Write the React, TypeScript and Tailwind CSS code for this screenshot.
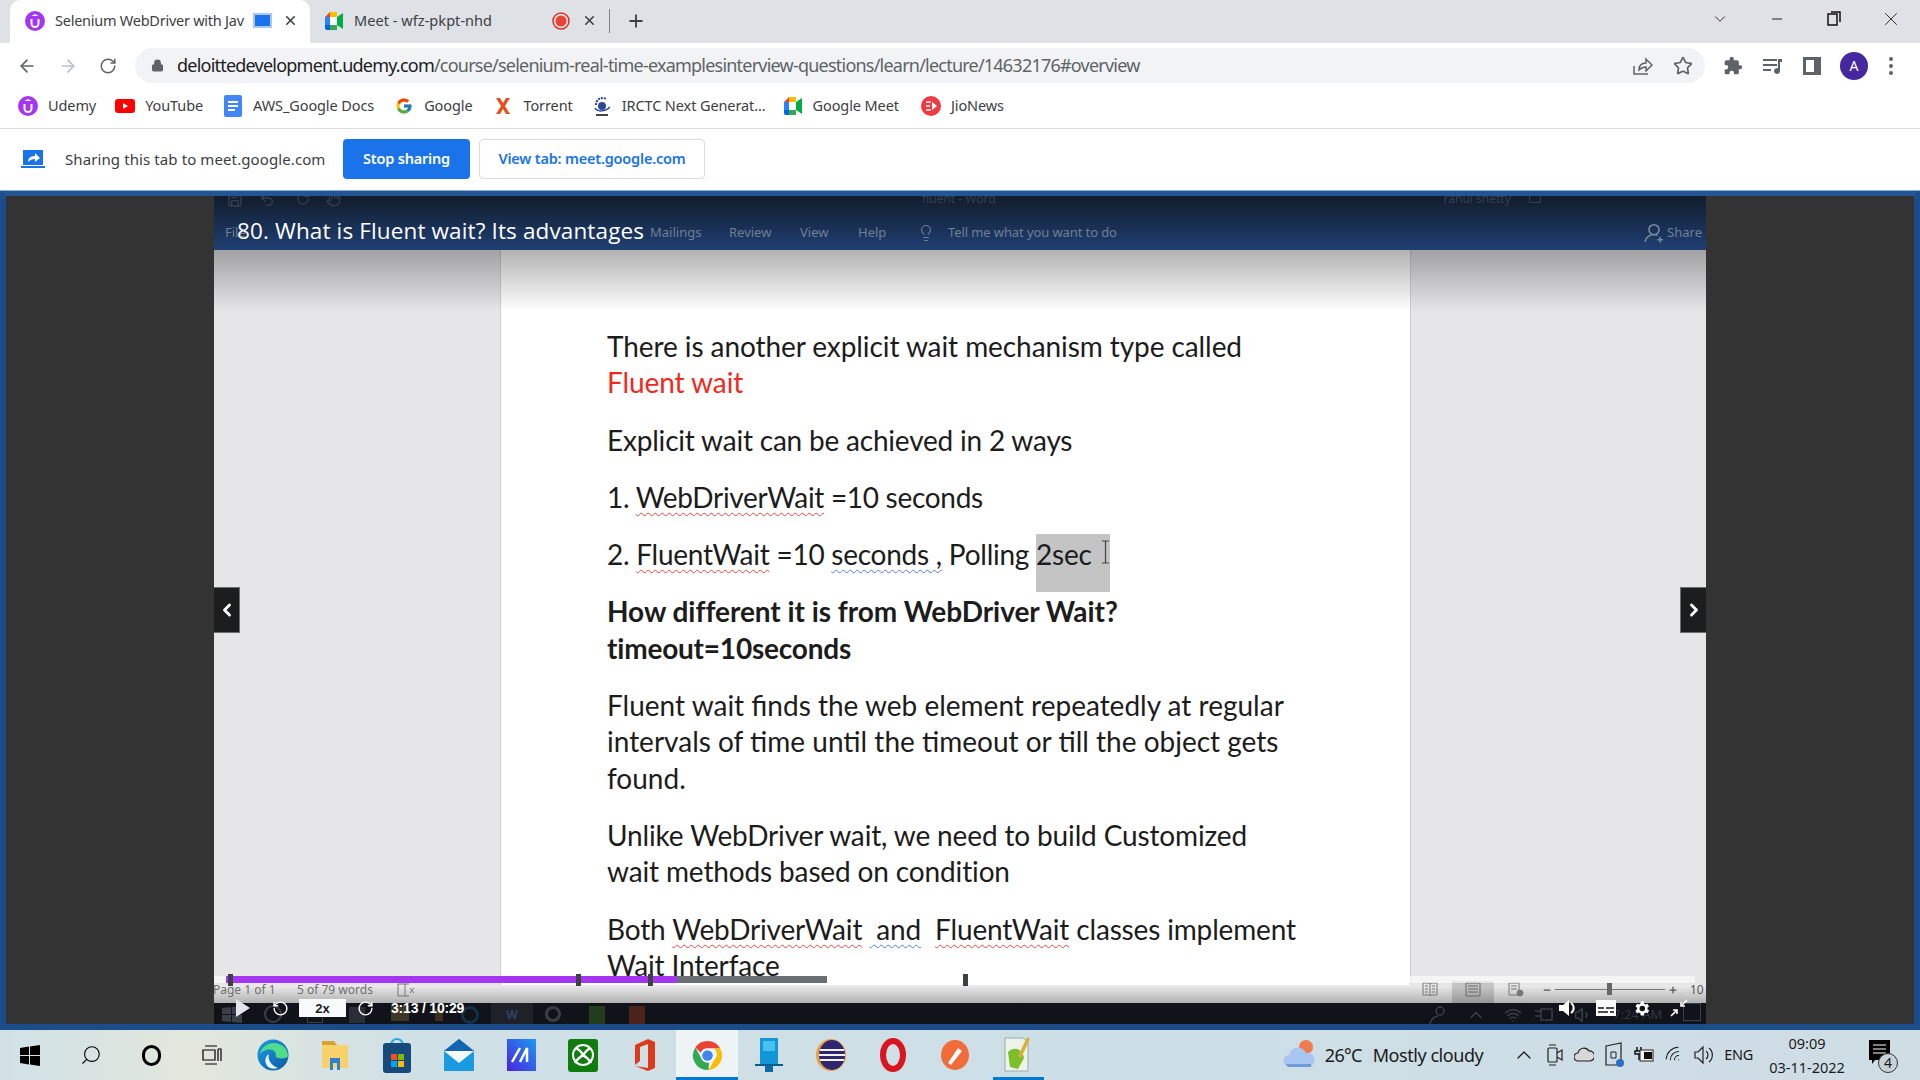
import React from "react";
import { ArrowLeft, ArrowRight, RotateCw, RotateCcw, Lock, Star, X, Plus, ChevronDown, ChevronUp, ChevronLeft, ChevronRight, Minus, Lightbulb, Volume1, Wifi, Search, Save, Undo2, Hand } from "lucide-react";
import { FcGoogle } from "react-icons/fc";

const Udemy = ({ s = 20 }: { s?: number }) => (
  <svg width={s} height={s} viewBox="0 0 20 20"><circle cx="10" cy="10" r="10" fill="#a435f0" /><path d="M6.5 8v4.5a3.5 3.5 0 0 0 7 0V8" fill="none" stroke="#fff" strokeWidth="2" /><path d="M10 3l3.5 2H6.5z" fill="#fff" /></svg>
);
const Meet = ({ s = 20 }: { s?: number }) => (
  <svg width={s} height={s} viewBox="0 0 20 20"><path d="M1 6l5-5h7v5H6v3H1z" fill="#ea4335" /><path d="M6 1h7v5H6z" fill="#fbbc04" /><path d="M1 6h5v8H1z" fill="#2684fc" /><path d="M1 14h5v5H3a2 2 0 0 1-2-2z" fill="#0066da" /><path d="M6 14h7v5H6z" fill="#34a853" /><path d="M13 6v8l6 4V2z" fill="#00ac47" /><path d="M6 6h7v8H6z" fill="#fff" /></svg>
);
const YouTube = () => (
  <svg width="20" height="14" viewBox="0 0 20 14"><rect width="20" height="14" rx="3" fill="#f00" /><path d="M8 4l5 3-5 3z" fill="#fff" /></svg>
);
const Docs = () => (
  <svg width="20" height="24" viewBox="0 0 20 24"><rect x="1" y="1" width="18" height="22" rx="2" fill="#4285f4" /><path d="M5 8h10M5 12h10M5 16h7" stroke="#fff" strokeWidth="2" /></svg>
);
const Torrent = () => (
  <svg width="16" height="18" viewBox="0 0 16 18"><path d="M1 1h4l3 5 3-5h4l-5 8 5 8h-4l-3-5-3 5H1l5-8z" fill="#e8501f" /></svg>
);
const Irctc = () => (
  <svg width="20" height="24" viewBox="0 0 20 24"><path d="M4 11a6.5 6.5 0 0 1 10-6" fill="none" stroke="#2d4a9a" strokeWidth="2" strokeDasharray="2 1" /><circle cx="10" cy="12" r="4" fill="#2d4a9a" /><path d="M3 14c2 4 10 4 15-1" fill="none" stroke="#2d4a9a" strokeWidth="1.5" /><path d="M4 20h12v2H4z" fill="#445" /></svg>
);
const Jio = () => (
  <svg width="20" height="20" viewBox="0 0 20 20"><circle cx="10" cy="10" r="10" fill="#ee3a43" /><path d="M5 6h5M5 10h4M5 14h5" stroke="#fff" strokeWidth="1.6" /><path d="M11 6l5 4-5 4z" fill="#fff" /></svg>
);
const ChromeLogo = ({ s = 30 }: { s?: number }) => (
  <svg width={s} height={s} viewBox="0 0 32 32">
    <path d="M16 1a15 15 0 0 1 13 7.5H16a7.5 7.5 0 0 0-7 4.6L3.500 7.700A15 15 0 0 1 16 1z" fill="#ea4335" />
    <path d="M29 8.500A15 15 0 0 1 17 31l6.500-11.200A7.500 7.500 0 0 0 22.500 8.500z" fill="#fbbc04" />
    <path d="M3.500 7.700L10 19.500a7.500 7.500 0 0 0 7.500 3.800L17 31A15 15 0 0 1 3.500 7.700z" fill="#34a853" />
    <circle cx="16" cy="16" r="7" fill="#fff" /><circle cx="16" cy="16" r="5.500" fill="#4285f4" />
  </svg>
);

const BOOKMARKS = [
  { icon: <Udemy />, text: "Udemy", ml: "ml-[18px]" },
  { icon: <YouTube />, text: "YouTube", ml: "ml-[19px]" },
  { icon: <Docs />, text: "AWS_Google Docs", ml: "ml-[20px]" },
  { icon: <FcGoogle size={18} />, text: "Google", ml: "ml-[20px]" },
  { icon: <Torrent />, text: "Torrent", ml: "ml-[21px]" },
  { icon: <Irctc />, text: "IRCTC Next Generat...", ml: "ml-[19px]" },
  { icon: <Meet />, text: "Google Meet", ml: "ml-[17px]" },
  { icon: <Jio />, text: "JioNews", ml: "ml-[22px]" },
];

const Red = ({ children, blue }: { children: React.ReactNode; blue?: boolean }) => (
  <span className={`underline decoration-wavy decoration-1 underline-offset-[4px] ${blue ? "decoration-[#4a7de0]" : "decoration-[#e8433a]"}`}>{children}</span>
);

const DOC = "font-['Lato',sans-serif] text-[28px] leading-[36.3px] text-[#1c1c1c]";

const Document = () => (
  <div className={`${DOC} pl-[106px] pt-[78px] flex flex-col gap-[21px]`}>
    <p className="tracking-[-0.08px]">There is another explicit wait mechanism type called<br /><span className="text-[#f0291c]">Fluent wait</span></p>
    <p className="tracking-[-0.2px]">Explicit wait can be achieved in 2 ways</p>
    <p className="tracking-[-0.3px]">1. <Red>WebDriverWait</Red> =10 seconds</p>
    <p className="tracking-[-0.25px]">2. <Red>FluentWait</Red> =10 <Red blue>seconds ,</Red> Polling <span className="relative bg-[#c4c4c4] pt-[3px] pb-[21px] pr-[18px]">2sec<svg className="absolute right-0 top-[6px]" width="9" height="24" viewBox="0 0 9 24" fill="none" stroke="#444" strokeWidth="1.200"><path d="M1 1h7M4.500 1v22M1 23h7" /></svg></span></p>
    <p className="font-bold tracking-[-0.05px]">How different it is from WebDriver Wait?<br /><span className="tracking-[-0.2px]">timeout=10seconds</span></p>
    <p className="tracking-[0px]">Fluent wait finds the web element repeatedly at regular<br />intervals of time until the timeout or till the object gets<br />found.</p>
    <p className="tracking-[-0.14px]">Unlike WebDriver wait, we need to build Customized<br />wait methods based on condition</p>
    <p className="tracking-[-0.16px]">Both <Red>WebDriverWait</Red> <Red blue>&nbsp;and</Red> &nbsp;<Red>FluentWait</Red> classes implement<br />Wait Interface</p>
  </div>
);

const NavArrow = ({ right }: { right?: boolean }) => (
  <div className={`absolute top-[337px] w-[26px] h-[46px] bg-[#1c1d1f] border border-[#6a6f73] flex items-center justify-center text-white ${right ? "right-0 border-r-0" : "left-0 border-l-0"}`}>
    {right ? <ChevronRight size={20} strokeWidth={3.500} /> : <ChevronLeft size={20} strokeWidth={3.500} />}
  </div>
);

const Marker = ({ left }: { left: string }) => <div className={`absolute top-[-2px] w-[5px] h-[12px] bg-[#3e4143] ${left}`} />;

const GearFilled = () => (
  <svg width="19" height="19" viewBox="0 0 24 24" fill="#fff"><path d="M19.400 13c.1-.3.100-.7.100-1s0-.7-.1-1l2.100-1.600-2-3.500-2.500 1a8 8 0 0 0-1.700-1L15 3.200h-4l-.4 2.700a8 8 0 0 0-1.700 1l-2.500-1-2 3.500L6.500 11c0 .3-.1.700-.1 1s0 .7.100 1l-2.100 1.600 2 3.500 2.500-1a8 8 0 0 0 1.700 1l.4 2.700h4l.4-2.700a8 8 0 0 0 1.700-1l2.500 1 2-3.500zM13 15.500a3.500 3.500 0 1 1 0-7 3.500 3.500 0 0 1 0 7z" /></svg>
);

const VideoFooter = () => (
  <div className="relative h-[45px] shrink-0">
    <div className="h-[18px] pb-[9px] bg-gradient-to-b from-[#ececec] to-[#b2b2b2] flex items-center text-[12px] text-[#6f6f6f] font-['Noto_Sans',sans-serif] relative">
      <span className="ml-[-1px] w-[84px]">Page 1 of 1</span>
      <span className="w-[100px]">5 of 79 words</span>
      <svg width="18" height="14" viewBox="0 0 18 14" fill="none" stroke="#777"><path d="M1 1h7v12H1zM8 1h4M8 13h4M13 5l4 5M17 5l-4 5" /></svg>
      <div className="ml-auto flex items-center h-full">
        <svg width="16" height="15" viewBox="0 0 16 15" fill="none" stroke="#777"><path d="M1 1h6l1 1 1-1h6v12H9l-1 1-1-1H1zM8 2v11M3 4h3M3 7h3M3 10h3M10 4h3M10 7h3M10 10h3" /></svg>
        <div className="ml-[14px] w-[42px] h-[22px] mt-[4px] bg-black/15 flex items-center justify-center">
          <svg className="mt-[-4px]" width="16" height="15" viewBox="0 0 16 15" fill="none" stroke="#666"><path d="M1 1h14v13H1zM3 4h10M3 7h10M3 10h10" /></svg>
        </div>
        <svg className="ml-[14px]" width="16" height="15" viewBox="0 0 16 15" fill="none" stroke="#777"><path d="M1 1h10v12H1zM3 4h6M3 7h6" /><circle cx="12" cy="11" r="3" fill="#777" /></svg>
        <Minus size={10} strokeWidth={3} className="ml-[18px] text-[#555]" />
        <div className="relative ml-[3px] w-[110px] h-[1px] bg-[#777]"><div className="absolute left-[52px] top-[-6px] w-[5px] h-[12px] bg-[#666]" /></div>
        <Plus size={10} strokeWidth={3} className="ml-[3px] text-[#555]" />
        <span className="ml-[12px] w-[16px] overflow-hidden text-[#555] whitespace-nowrap">10</span>
      </div>
    </div>
    <div className="h-[27px] bg-[#10131a] flex items-start text-[#3a3f48]">
      <svg className="ml-[8px] mt-[2px]" width="20" height="20" viewBox="0 0 20 20" fill="#3a3f48"><path d="M0 3l9-1v7H0zM10 2l10-1v8H10zM0 10h9v7l-9-1zM10 10h10v8l-10-1z" /></svg>
      <div className="ml-[22px] mt-[2px] w-[18px] h-[18px] rounded-full border-2 border-[#3a3f48]" />
      <div className="ml-[25px] mt-[4px] w-[16px] h-[16px] border border-[#3a3f48]" />
      <div className="ml-[26px] mt-[4px] w-[16px] h-[16px] bg-[#2a2e36]" />
      <div className="ml-[26px] mt-[3px] w-[18px] h-[15px] bg-[#3c3828]" />
      <div className="ml-[26px] mt-[6px] w-[8px] h-[12px] bg-[#3c2f1c]" />
      <div className="ml-[18px] mt-[3px] w-[18px] h-[18px] rounded-full border-[3px] border-[#14314a]" />
      <div className="ml-[12px] w-[42px] h-full bg-[#1e2128] flex justify-center pt-[3px] text-[#2c405e] text-[12px] font-bold">W</div>
      <div className="ml-[12px] mt-[3px] w-[16px] h-[16px] rounded-full border-[3px] border-[#3a3d43]" />
      <div className="ml-[28px] mt-[3px] w-[16px] h-[18px] bg-[#233d1c]" />
      <div className="ml-[24px] mt-[3px] w-[16px] h-[18px] bg-[#4a231c]" />
      <div className="ml-auto flex items-start mr-[5px]">
        <svg className="mt-[2px]" width="20" height="20" viewBox="0 0 20 20" fill="none" stroke="#3a3f48" strokeWidth="1.500"><circle cx="12" cy="6" r="4" /><path d="M2 20a9 9 0 0 1 8-9" /></svg>
        <ChevronUp size={20} className="ml-[18px] mt-[2px]" />
        <Wifi size={18} className="ml-[18px] mt-[3px]" />
        <svg className="ml-[12px] mt-[3px]" width="20" height="18" viewBox="0 0 20 18" fill="none" stroke="#3a3f48" strokeWidth="1.500"><path d="M1 5h6M1 10h6M7 3h11v11H7z" /></svg>
        <Volume1 size={18} className="ml-[20px] mt-[3px]" />
        <span className="ml-[21px] mt-[2px] w-[50px] whitespace-nowrap text-[13px] text-[#33373f] font-['Noto_Sans',sans-serif]">7:24 AM</span>
        <div className="ml-[20px] w-[18px] h-[18px] border border-[#3a3f48]" />
      </div>
    </div>
    {/* video player progress bar, over the frame */}
    <div className="absolute left-0 right-[11px] top-[-9px] h-[7px] bg-white/60">
      <div className="absolute left-[12px] w-[601px] h-full bg-[#6a6f73]" />
      <div className="absolute left-[12px] w-[451px] h-full bg-[#a435f0]" />
      <Marker left="left-[14px]" /><Marker left="left-[362px]" /><Marker left="left-[434px]" /><Marker left="left-[749px]" />
    </div>
    {/* video player controls, over the frame */}
    <div className="absolute inset-x-0 top-[13px] h-[20px] flex items-center text-white">
      <svg className="ml-[22px]" width="14" height="18" viewBox="0 0 14 18" fill="#e4e6ea"><path d="M0 0l14 9-14 9z" /></svg>
      <RotateCcw size={17} className="ml-[22px]" />
      <div className="ml-[10px] w-[47px] h-[18px] bg-[#f7f9fa] flex items-center justify-center text-[13px] leading-none font-bold text-[#1c1d1f] font-['Liberation_Sans',sans-serif]">2x</div>
      <RotateCw size={17} className="ml-[11px]" />
      <span className="ml-[17px] text-[14px] font-bold tracking-[-0.2px] font-['Liberation_Sans',sans-serif]">3:13 / 10:29</span>
      <div className="ml-auto flex items-center mr-[18px]">
        <svg width="18" height="18" viewBox="0 0 18 18" fill="#fff"><path d="M0 6h4l6-5v16l-6-5H0z" /><path d="M12 4a6 6 0 0 1 0 10" fill="none" stroke="#fff" strokeWidth="2" /></svg>
        <svg className="ml-[19px]" width="20" height="16" viewBox="0 0 20 16"><rect width="20" height="16" fill="#fff" /><path d="M2 8h6M10 8h8M2 12h10M14 12h4" stroke="#10131a" strokeWidth="1.600" /></svg>
        <span className="ml-[16px] flex"><GearFilled /></span>
        <svg className="ml-[19px]" width="18" height="18" viewBox="0 0 18 18" fill="none" stroke="#fff" strokeWidth="1.600"><path d="M17 1l-6 6M11 3v4h4M1 17l6-6M3 11h4v4" /></svg>
      </div>
    </div>
  </div>
);

const VideoHeader = () => (
  <div className="relative h-[60px] shrink-0 bg-gradient-to-b from-[#101926] to-[#1f3f73] font-['Noto_Sans',sans-serif] text-[13px] text-[#6f7f96] overflow-hidden">
    <div className="h-[22px] flex items-start pt-[2px] text-[#333f52]">
      <Save size={16} className="ml-[13px]" />
      <Undo2 size={16} className="ml-[16px]" />
      <RotateCw size={14} className="ml-[21px]" />
      <Hand size={15} className="ml-[16px]" />
      <span className="ml-[581px] text-[12px] leading-[14px]">fluent - Word</span>
      <span className="ml-[448px] text-[12px] leading-[14px]">rahul shetty</span>
      <span className="ml-[18px] w-[12px] h-[11px] border border-[#333f52]" />
    </div>
    <div className="h-[22px] mt-[10px] flex items-center">
      <span className="ml-[11px] w-[425px]">File</span>
      <span className="w-[79px]">Mailings</span>
      <span className="w-[71px]">Review</span>
      <span className="w-[58px]">View</span>
      <span className="w-[59px]">Help</span>
      <Lightbulb size={18} strokeWidth={1.500} />
      <span className="ml-[13px] tracking-[-0.1px]">Tell me what you want to do</span>
      <svg className="ml-auto" width="20" height="20" viewBox="0 0 18 18" fill="none" stroke="#7a8aa0" strokeWidth="1.400"><circle cx="9" cy="6" r="4.500" /><path d="M1 17a8 8 0 0 1 11-6M12 15h5M14.500 12.500v5" /></svg>
      <span className="ml-[3px] mr-[4px]">Share</span>
    </div>
    <div className="absolute left-[23px] top-[27px] text-[22.500px] leading-[28px] text-white font-medium tracking-[0.13px] font-['Open_Sans',sans-serif]">80. What is Fluent wait? Its advantages</div>
  </div>
);

const ICON0 = "w-[60.500px] h-full flex items-center justify-center shrink-0";
const ICON = "w-[62px] h-full flex items-center justify-center shrink-0";

const TaskIcons = () => (
  <div className="flex h-full">
    <div className={ICON0}><svg width="20" height="21" viewBox="0 0 20 21" fill="#000"><path d="M0 3l9-1.500V10H0zM10 1.400L20 0v10H10zM0 11h9v8.500L0 18zM10 11h10v10l-10-1.500z" /></svg></div>
    <div className={ICON0}><Search size={22} strokeWidth={1.200} className="-scale-x-100 text-black" /></div>
    <div className={ICON0}><div className="w-[19px] h-[21px] rounded-full border-[3px] border-black" /></div>
    <div className={ICON0}><svg width="20" height="20" viewBox="0 0 20 20" fill="none" stroke="#000" strokeWidth="1.200"><path d="M3 1h12M3 19h12M1 5h12v10H1zM16 4h3v12M16 4v12" /></svg></div>
    <div className={ICON}><svg width="32" height="34" viewBox="0 0 32 34"><defs><linearGradient id="edge" x1="0" y1="0" x2="1" y2="1"><stop offset="0" stopColor="#1b9de2" /><stop offset="1" stopColor="#0c59a4" /></linearGradient></defs><circle cx="16" cy="17" r="15.500" fill="url(#edge)" /><path d="M31 18c0-8-7-13-14-13C10 5 4 10 3 16c4-5 12-6 15-2 2 3-1 5 3 6s10 0 10-2z" fill="#4fdc8c" /><path d="M13 30c-6-3-6-11-1-14-2 6 3 12 9 14-3 1-5 1-8 0z" fill="#e6f6fb" /></svg></div>
    <div className={ICON}><svg width="28" height="32" viewBox="0 0 28 32"><path d="M1 2h12l3 4H1z" fill="#d9a22e" /><rect x="1" y="6" width="26" height="23" rx="1" fill="#f7d26a" /><path d="M9 31V19h10v12h-3v-7h-4v7z" fill="#2d7fd3" /></svg></div>
    <div className={ICON}><svg width="28" height="36" viewBox="0 0 28 36"><path d="M8 8a6 6 0 0 1 12 0" fill="none" stroke="#2aa4e8" strokeWidth="2" /><rect y="6" width="28" height="30" rx="3" fill="#174a7a" /><rect x="8" y="17" width="6" height="6" fill="#f25022" /><rect x="15" y="17" width="6" height="6" fill="#7fba00" /><rect x="8" y="24" width="6" height="6" fill="#00a4ef" /><rect x="15" y="24" width="6" height="6" fill="#ffb900" /></svg></div>
    <div className={ICON}><svg width="30" height="32" viewBox="0 0 30 32"><path d="M15 0l15 12v20H0V12z" fill="#1a9ae0" /><path d="M0 12l15 12 15-12H0z" fill="#f4f8fb" /><path d="M15 0l15 12H0z" fill="#1265ae" /></svg></div>
    <div className={ICON}><svg width="29" height="32" viewBox="0 0 29 32"><defs><linearGradient id="mm" x1="0" y1="1" x2="1" y2="0"><stop offset="0" stopColor="#4a23e0" /><stop offset="1" stopColor="#1c9bf0" /></linearGradient></defs><rect width="29" height="32" fill="url(#mm)" /><path d="M5 23L13 9M13 23l7-14v14" fill="none" stroke="#fff" strokeWidth="2.500" /></svg></div>
    <div className={ICON}><svg width="30" height="33" viewBox="0 0 30 33"><rect width="30" height="33" rx="3" fill="#107c10" /><circle cx="15" cy="16" r="10" fill="none" stroke="#fff" strokeWidth="2" /><path d="M8 9c4 2 6 5 7 7 2-3 4-5 7-7M7 24c2-4 5-6 8-8 3 2 6 4 8 8" fill="none" stroke="#fff" strokeWidth="2.400" /></svg></div>
    <div className={ICON}><svg width="24" height="34" viewBox="0 0 24 34"><path d="M2 7L15 1l7 3v26l-7 3-13-5 13 2V6L7 9v14l-5 4z" fill="#dc3a1b" /></svg></div>
    <div className={`${ICON} relative bg-[#eef3f6] border-b-[3px] border-[#0078d4] pt-[3px]`}><ChromeLogo s={31} /></div>
    <div className={ICON}><svg width="28" height="34" viewBox="0 0 28 34"><path d="M5 0h18v26H5z" fill="#1296d8" /><path d="M8 3h12v10H8z" fill="#49c0ee" /><path d="M0 26h28v2H0z" fill="#0b5e8c" /><path d="M10 28h8v6h-8z" fill="#0b6ba8" /></svg></div>
    <div className={ICON}><svg width="30" height="32" viewBox="0 0 30 32"><ellipse cx="15" cy="16" rx="15" ry="16" fill="#e9a23b" /><ellipse cx="16" cy="16" rx="13" ry="15" fill="#2e2670" /><path d="M4 11h24M3 16h26M4 21h24" stroke="#f2f2f7" strokeWidth="2" /></svg></div>
    <div className={ICON}><svg width="26" height="34" viewBox="0 0 26 34"><ellipse cx="13" cy="17" rx="10" ry="14" fill="none" stroke="#d9161f" strokeWidth="6" /></svg></div>
    <div className={ICON}><svg width="28" height="30" viewBox="0 0 28 30"><ellipse cx="14" cy="15" rx="14" ry="15" fill="#f26b3a" /><path d="M7 23L17 8l4 3L10 25z" fill="#fff" /></svg></div>
    <div className={`${ICON} pb-[3px] relative`}><svg width="28" height="36" viewBox="0 0 28 36"><path d="M2 2h18l5 5v28H2z" fill="#eef3ea" stroke="#9aa" /><path d="M5 16c5-6 14-4 16 6l-6 11-8-2z" fill="#7bbf2a" /><path d="M24 1l3 2-9 19-3-2z" fill="#d9b13a" /></svg><div className="absolute bottom-0 left-[7px] right-[4px] h-[3px] bg-[#0078d4]" /></div>
  </div>
);

const Tray = () => (
  <div className="ml-auto h-full flex items-center text-[#1b1b1b] font-['Noto_Sans',sans-serif]">
    <svg width="32" height="34" viewBox="0 0 32 34"><circle cx="23" cy="9" r="7" fill="#ef7b50" /><path d="M7 29a6 6 0 0 1-1-12 9 9 0 0 1 17-2 7 7 0 0 1 3 14z" fill="#a9c6f2" /><path d="M3 26h25v3H5z" fill="#6f9ae0" /></svg>
    <span className="ml-[10px] text-[18px] tracking-[-0.7px]">26°C</span>
    <span className="ml-[11px] text-[18px] tracking-[-0.45px]">Mostly cloudy</span>
    <ChevronUp size={24} strokeWidth={1.300} className="ml-[29px]" />
    <svg className="ml-[11px]" width="16" height="24" viewBox="0 0 16 24" fill="none" stroke="#222" strokeWidth="1.200"><rect x="1" y="5" width="9" height="14" rx="1" /><path d="M10 10l5-3v10l-5-3M2 2h7M2 22h7" /></svg>
    <svg className="ml-[11px]" width="20" height="18" viewBox="0 0 20 18"><path d="M4 15a4 4 0 0 1 0-8 6 6 0 0 1 11-2 5 5 0 0 1 1 10z" fill="#d8d8d8" stroke="#222" strokeWidth="1.200" /></svg>
    <svg className="ml-[11px]" width="20" height="26" viewBox="0 0 20 26"><path d="M1 4l15-3v22L1 23z" fill="none" stroke="#222" strokeWidth="1.200" /><path d="M6 10h5v6H6z" fill="none" stroke="#222" /><circle cx="15" cy="21" r="4" fill="#2a6fc4" /></svg>
    <svg className="ml-[7px]" width="22" height="18" viewBox="0 0 22 18"><path d="M5 1v4M9 1v4M3 5h8v3H3zM7 8v6" stroke="#111" strokeWidth="1.500" fill="none" /><rect x="8" y="4" width="13" height="11" fill="#f4f4f4" stroke="#222" /><rect x="12" y="6" width="8" height="7" fill="#111" /></svg>
    <Wifi size={20} strokeWidth={1.200} className="ml-[10px] -rotate-45" />
    <svg className="ml-[10px]" width="20" height="22" viewBox="0 0 20 22" fill="none" stroke="#222" strokeWidth="1.200"><path d="M1 8h3l5-5v16l-5-5H1zM12 7a5 5 0 0 1 0 8M15 4a9 9 0 0 1 0 14" /></svg>
    <span className="ml-[10px] text-[14.500px] tracking-[-0.3px]">ENG</span>
    <div className="ml-[15px] w-[78px] flex flex-col items-center text-[14.500px] leading-[24px] tracking-[0px] whitespace-nowrap"><span>09:09</span><span>03-11-2022</span></div>
    <div className="relative ml-[23px] mr-[30px] w-[21px] h-[30px]">
      <svg width="21" height="24" viewBox="0 0 21 24"><path d="M0 0h21v20H6l-3 4v-4H0z" fill="#000" /><path d="M4 5h13M4 9h13M4 13h13" stroke="#fff" /></svg>
      <div className="absolute left-[9px] top-[13px] w-[20px] h-[20px] rounded-full border border-[#333] bg-[#c8d3d9] flex items-center justify-center text-[14px] leading-none">4</div>
    </div>
  </div>
);

export default function App() {
  return (
    <div className="w-[1920px] h-[1080px] overflow-hidden flex flex-col bg-white font-['Noto_Sans',sans-serif]">
      {/* tabs */}
      <div className="h-[43px] shrink-0 bg-[#dee1e6] flex items-end relative text-[14.500px] text-[#3c4043] tracking-[-0.25px]">
        <div className="ml-[10px] w-[300px] h-[43px] bg-white rounded-t-[10px] flex items-center pb-[2px]">
          <span className="ml-[15px] flex"><Udemy /></span>
          <span className="ml-[10px] w-[190px] whitespace-nowrap overflow-hidden">Selenium WebDriver with Jav</span>
          <span className="ml-[8px] w-[19px] h-[15px] bg-[#1a73e8] border-2 border-[#a9c8f4]" />
          <X size={15} strokeWidth={2.500} className="ml-[11px] text-[#3c4043]" />
        </div>
        <div className="h-[43px] flex items-center pb-[2px]">
          <span className="ml-[14px] flex"><Meet /></span>
          <span className="ml-[10px] w-[198px] whitespace-nowrap tracking-[0.05px]">Meet - wfz-pkpt-nhd</span>
          <svg width="18" height="18" viewBox="0 0 18 18"><circle cx="9" cy="9" r="8" fill="none" stroke="#d93025" strokeWidth="1.500" /><circle cx="9" cy="9" r="5.500" fill="#ea4335" /></svg>
          <X size={15} strokeWidth={2.500} className="ml-[12px] text-[#3c4043]" />
          <span className="ml-[12px] w-[1px] h-[24px] bg-[#7f8388]" />
          <Plus size={20} strokeWidth={2.200} className="ml-[16px] text-[#3c4043]" />
        </div>
        <div className="ml-auto h-[43px] flex items-center text-[#222] pb-[6px]">
          <ChevronDown size={18} strokeWidth={1.200} />
          <Minus size={16} strokeWidth={1.600} className="ml-[40px]" />
          <svg className="ml-[42px]" width="14" height="15" viewBox="0 0 14 15" fill="none" stroke="#111" strokeWidth="1.500"><rect x="1" y="3" width="9" height="11" /><path d="M4 1h9v10" /></svg>
          <X size={22} strokeWidth={1} className="ml-[39px] mr-[18px]" />
        </div>
      </div>
      {/* toolbar */}
      <div className="h-[43px] pt-[2px] shrink-0 flex items-center text-[#5f6368]">
        <ArrowLeft size={20} className="ml-[17px]" />
        <ArrowRight size={20} className="ml-[21px] text-[#bcbfc3]" />
        <RotateCw size={18} className="ml-[21px]" />
        <div className="ml-[18px] w-[1570px] h-[35px] rounded-full bg-[#f1f3f4] flex items-center text-[18px] tracking-[-0.78px]">
          <Lock size={13} fill="#5f6368" strokeWidth={2.500} className="ml-[16px]" />
          <span className="ml-[13px] text-[#202124] whitespace-nowrap">deloittedevelopment.udemy.com<span className="text-[#5f6368]">/course/selenium-real-time-examplesinterview-questions/learn/lecture/14632176#overview</span></span>
          <svg className="ml-auto" width="20" height="20" viewBox="0 0 20 20" fill="none" stroke="#5f6368" strokeWidth="1.500"><path d="M1 10v8h14M6 14c0-5 3-7 7-7V3l6 6-6 6v-4c-3 0-5 1-7 3z" /></svg>
          <Star size={20} strokeWidth={2} className="ml-[20px] mr-[12px]" />
        </div>
        <svg className="ml-[18px]" width="20" height="20" viewBox="0 0 24 24" fill="#5f6368"><path d="M20.500 11H19V7a2 2 0 0 0-2-2h-4V3.500a2.500 2.500 0 0 0-5 0V5H4a2 2 0 0 0-2 2v3.800h1.500a2.700 2.700 0 0 1 0 5.400H2V20a2 2 0 0 0 2 2h3.800v-1.500a2.700 2.700 0 0 1 5.400 0V22H17a2 2 0 0 0 2-2v-4h1.500a2.500 2.500 0 0 0 0-5z" /></svg>
        <svg className="ml-[20px]" width="20" height="18" viewBox="0 0 20 18" fill="#5f6368"><path d="M0 2h14v2H0zM0 7h14v2H0zM0 12h8v2H0zM15 2h4v3h-2v9a3 3 0 1 1-2-2.800z" /></svg>
        <div className="ml-[20px] w-[18px] h-[18px] border-[3px] border-[#5f6368] border-r-[7px]" />
        <div className="ml-[19px] w-[28px] h-[28px] rounded-full bg-[#4527a0] text-white text-[14px] flex items-center justify-center">A</div>
        <div className="ml-[21px] flex flex-col gap-[3px]"><i className="w-[4px] h-[4px] rounded-full bg-[#5f6368]" /><i className="w-[4px] h-[4px] rounded-full bg-[#5f6368]" /><i className="w-[4px] h-[4px] rounded-full bg-[#5f6368]" /></div>
      </div>
      {/* bookmarks */}
      <div className="h-[43px] pb-[2px] shrink-0 border-b border-[#dadce0] flex items-center text-[14.500px] text-[#3c4043] tracking-[-0.1px]">
        {BOOKMARKS.map((b) => (
          <div key={b.text} className={`flex items-center whitespace-nowrap ${b.ml}`}>
            <span className="w-[20px] flex justify-center">{b.icon}</span>
            <span className="ml-[10px]">{b.text}</span>
          </div>
        ))}
      </div>
      {/* sharing bar */}
      <div className="h-[61px] pb-[1px] shrink-0 flex items-center text-[14.500px] text-[#3c4043]">
        <svg className="ml-[21px]" width="24" height="18" viewBox="0 0 24 18"><path d="M2 0h20v15H2z" fill="#1a73e8" /><path d="M0 16h24v2H0z" fill="#1a73e8" /><path d="M7 12c0-4 3-6 7-6V3l5 5-5 4V9c-3 0-5 1-7 3z" fill="#fff" /></svg>
        <span className="ml-[20px] w-[278px] text-[15px] tracking-[0.1px]">Sharing this tab to meet.google.com</span>
        <div className="w-[127px] h-[40px] rounded-[4px] bg-[#1a73e8] text-white font-semibold flex items-center justify-center tracking-[-0.2px]">Stop sharing</div>
        <div className="ml-[9px] w-[226px] h-[40px] rounded-[4px] border border-[#dadce0] text-[#1a73e8] font-semibold flex items-center justify-center tracking-[-0.2px]">View tab: meet.google.com</div>
      </div>
      {/* shared video frame */}
      <div className="relative flex-1 min-h-0 bg-[#333333] flex justify-center">
        <div className="w-[1492px] h-full flex flex-col">
          <VideoHeader />
          <div className="relative flex-1 min-h-0 flex overflow-hidden bg-[#e6e6e8]">
            <div className="w-[287px] shrink-0 border-r border-[#cfcfcf]" />
            <div className="w-[910px] shrink-0 bg-white border-r border-[#cfcfcf] overflow-hidden"><Document /></div>
            <div className="absolute inset-x-0 top-0 h-[62px] bg-gradient-to-b from-black/30 to-transparent" />
            <NavArrow />
            <NavArrow right />
          </div>
          <VideoFooter />
        </div>
        {/* blue share-highlight frame over the captured tab */}
        <div className="absolute inset-0 border-[6px] border-[#1c4e8f]/95 border-t-[#245593]" />
        <div className="absolute inset-x-0 top-0 h-[1px] bg-[#8db0d6]" />
      </div>
      {/* windows taskbar */}
      <div className="h-[50px] shrink-0 flex items-stretch bg-[linear-gradient(90deg,#d0e1e7_0%,#e2e7dc_10%,#cfe0e6_22%,#cddfe6_60%,#cfdde5_100%)]">
        <TaskIcons />
        <Tray />
      </div>
    </div>
  );
}
